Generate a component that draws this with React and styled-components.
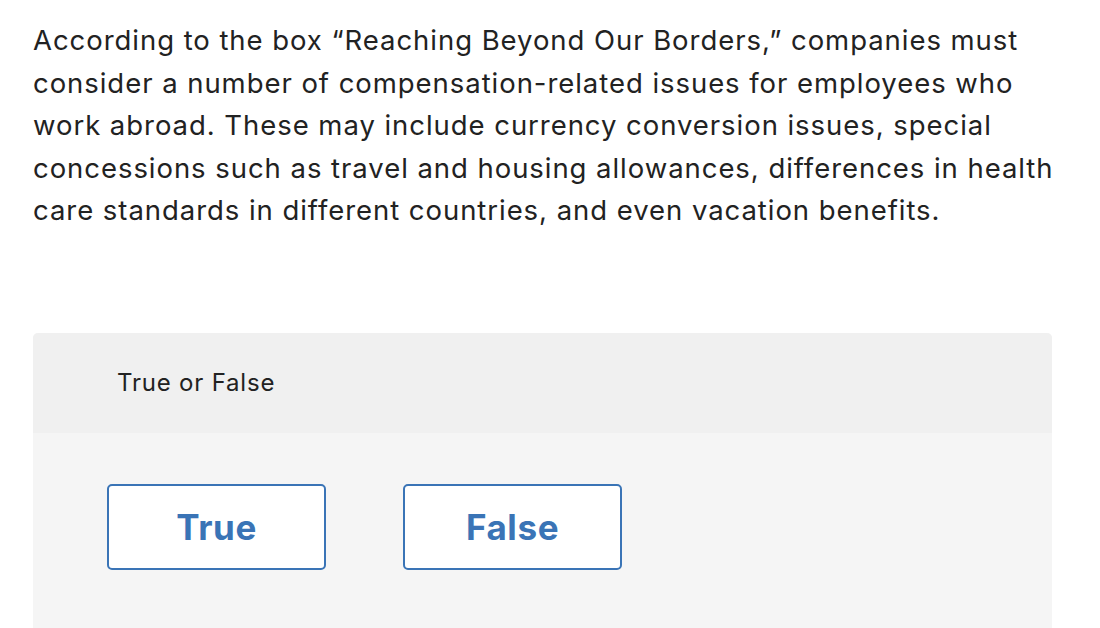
import React from "react";
import styled, { createGlobalStyle } from "styled-components";

const GlobalStyle = createGlobalStyle`
  body {
    margin: 0;
    background: #ffffff;
    font-family: "Inter", "Liberation Sans", sans-serif;
    color: #222222;
  }
`;

const Page = styled.div`
  padding: 19px 20px 0 33px;
`;

const Prompt = styled.p`
  margin: 0;
  font-size: 27.5px;
  line-height: 42.5px;
  letter-spacing: 0.95px;
  white-space: nowrap;
  color: #222222;
`;

const Panel = styled.section`
  margin-top: 101px;
  width: 1019px;
  border-radius: 5px 5px 0 0;
  overflow: hidden;
  background: #f5f5f5;
`;

const PanelHeader = styled.div`
  height: 100px;
  display: flex;
  align-items: center;
  padding-left: 84px;
  background: #f0f0f0;
  font-size: 24px;
  letter-spacing: 0.8px;
  color: #222222;
`;

const Choices = styled.div`
  display: flex;
  gap: 77px;
  padding: 51px 0 80px 74px;
`;

const Choice = styled.button`
  width: 219px;
  height: 86px;
  background: #ffffff;
  border: 2px solid #3a74b6;
  border-radius: 5px;
  font-family: "Inter", "Liberation Sans", sans-serif;
  font-weight: 700;
  font-size: 35px;
  letter-spacing: 0.6px;
  color: #3a74b6;
  cursor: pointer;
`;

export default function App() {
  return (
    <>
      <GlobalStyle />
      <Page>
        <Prompt>
          According to the box “Reaching Beyond Our Borders,” companies must
          <br />
          consider a number of compensation-related issues for employees who
          <br />
          work abroad. These may include currency conversion issues, special
          <br />
          concessions such as travel and housing allowances, differences in health
          <br />
          care standards in different countries, and even vacation benefits.
        </Prompt>
        <Panel>
          <PanelHeader>True or False</PanelHeader>
          <Choices>
            <Choice>True</Choice>
            <Choice>False</Choice>
          </Choices>
        </Panel>
      </Page>
    </>
  );
}
